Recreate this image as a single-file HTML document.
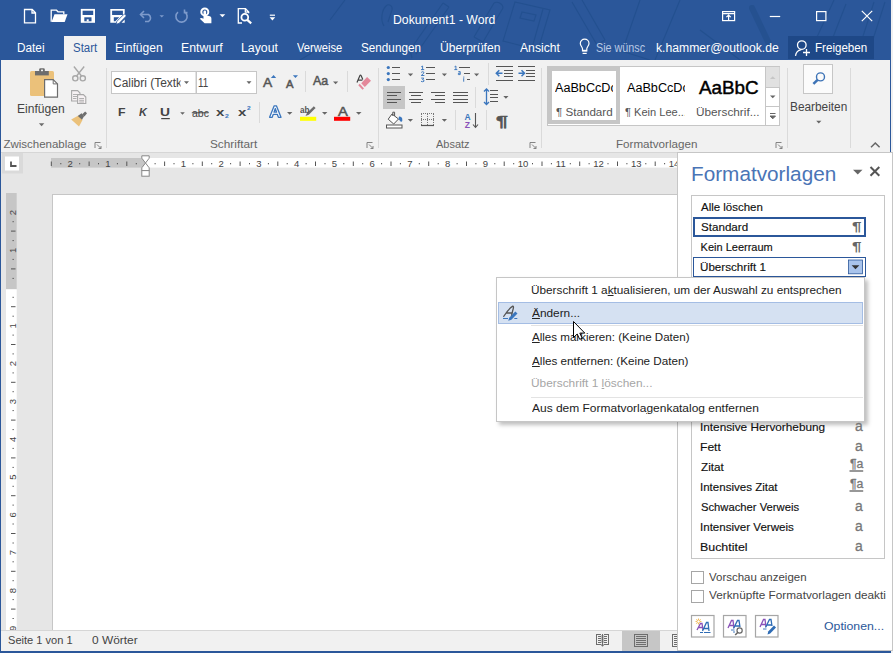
<!DOCTYPE html><html><head><meta charset="utf-8"><style>
*{margin:0;padding:0;box-sizing:border-box}
html,body{width:893px;height:653px;overflow:hidden;background:#2b579a;font-family:"Liberation Sans",sans-serif}
.a{position:absolute}
.t{position:absolute;white-space:nowrap;line-height:1;transform-origin:0 0}
</style></head><body>

<!-- window bg right strip -->
<div class="a" style="left:891px;top:0;width:2px;height:653px;background:#f0f0f0"></div>
<!-- ribbon -->
<div class="a" style="left:1px;top:60px;width:889px;height:92px;background:#f1f1f1"></div>
<div class="a" style="left:64px;top:36px;width:42px;height:24px;background:#f1f1f1"></div>
<svg class="a" style="left:0;top:0" width="891" height="60" viewBox="0 0 891 60">
<g fill="none" stroke="#23508f" stroke-width="1.1" opacity="0.9">
 <path d="M384 26C380 20 382 10 386 6C389 3 393 6 392 10L388 22"/>
 <path d="M443 3L410 50 M449 7L416 54 M443 3L449 7 M410 50L412 58"/>
 <path d="M494 3L474 37 M503 8L483 42 M494 3C498 1 503 4 503 8 M474 37L483 42"/>
 <path d="M515 2L550 10L538 50L503 41Z M543 9L532 48"/>
 <path d="M522 12L536 15L534 21L520 18Z"/>
 <path d="M572 2L597 45 M582 0L605 40 M597 45L605 40"/>
 <path d="M640 0L622 52 M612 48L650 60"/>
 <path d="M680 0L655 60 M700 30L740 60"/>
 <path d="M834 0L812 48 M846 4L828 50 M812 48L828 50"/>
 <path d="M874 2L856 58 M885 2L867 58"/>
 <path d="M320 48L300 60 M330 20L345 0"/>
</g>
<path d="M752 8L770 46" stroke="#24508e" stroke-width="6" stroke-linecap="round" opacity="0.8"/>
</svg>

<div class="a" style="left:788px;top:36px;width:86px;height:23px;background:#1e4887"></div>
<svg class="a" style="left:0;top:0" width="893" height="60" viewBox="0 0 893 60">
<g fill="none" stroke="#fff" stroke-width="1.3">
 <!-- new -->
 <path d="M24.5 9.5H32.2L35.5 12.8V22.8H24.5Z M32 9.5V13H35.5"/>
 <!-- open -->
 <path d="M51.2 21.8V10.2H56.5L58 11.8H63.8V14.2"/>
 <!-- save -->
 
 <!-- save edit -->
 
</g>
<path d="M51.5 22L54.5 14.3H67.5L64.7 22Z" fill="#fff"/>
<rect x="80.8" y="8.9" width="14.2" height="13.9" fill="#fff"/>
<rect x="82.6" y="10.7" width="10.6" height="4.3" fill="#2b579a"/>
<rect x="84.3" y="17.3" width="7.2" height="4" fill="#2b579a"/>
<rect x="86.7" y="19.3" width="2" height="2.1" fill="#fff"/>
<path d="M110.3 8.9H124.7V15.2L117 22.8H110.3Z" fill="#fff"/>
<rect x="112.1" y="10.7" width="10.8" height="4.3" fill="#2b579a"/>
<path d="M113.8 17.3H119.3L115.3 21.3H113.8Z" fill="#2b579a"/>
<path d="M121.5 22.8H124.7V19.6Z" fill="#fff"/>
<path d="M116 24.3L116.9 21.3L123.5 14.7A1.3 1.3 0 0 1 125.6 16.8L119 23.4Z" fill="#fff" stroke="#2b579a" stroke-width="0.8"/>
<!-- undo disabled -->
<g fill="none" stroke="#7d9acb" stroke-width="1.6">
 <path d="M141 14.5H148.5A4 4 0 0 1 148.5 21.5H145"/>
 <path d="M144 11L140.5 14.5L144 18"/>
 <path d="M178 12.2A5.6 5.6 0 1 0 184.5 11.8 M184.5 9.5V12.6H187.5"/>
</g>
<path d="M159.5 15.2H164L161.75 17.6Z" fill="#7d9acb"/>
<!-- touch -->
<circle cx="204.8" cy="11.9" r="3.5" fill="none" stroke="#fff" stroke-width="2"/>
<path d="M203.5 18.8V11.8A1.3 1.3 0 0 1 206.1 11.8V15.3L209.9 16.3Q211.4 16.8 211.4 18.4V23.3H204.6L199.8 18.8Q200.9 17.4 202.3 18.2Z" fill="#fff"/>
<path d="M219.5 14.3H225.3L222.4 17.3Z" fill="#fff"/>
<!-- print preview -->
<g fill="none" stroke="#fff" stroke-width="1.3">
 <path d="M242 23H238.3V8.7H245.5L248.7 12V13.2 M245.3 8.7V12.2H248.7"/>
 <circle cx="244.8" cy="17.3" r="3.4" stroke-width="1.8"/>
 <path d="M247.3 19.9L251.2 23.4" stroke-width="2.2"/>
</g>
<!-- customize -->
<path d="M269.8 15.2H275" stroke="#fff" stroke-width="1.2"/>
<path d="M269.6 17.3H275.2L272.4 20.5Z" fill="#fff"/>
<!-- window controls -->
<g fill="none" stroke="#fff" stroke-width="1.2">
 <rect x="722.6" y="11.6" width="12" height="9"/>
 <path d="M722.6 13.6H734.6 M728.6 20.6V15 M726.4 17.2L728.6 15L730.8 17.2"/>
 <path d="M769.8 16.5H780.2"/>
 <rect x="816.6" y="11.6" width="9.3" height="9"/>
 <path d="M861.8 10.8L872.2 21.2 M872.2 10.8L861.8 21.2"/>
</g>
<!-- bulb -->
<g fill="none" stroke="#fff" stroke-width="1.2">
 <path d="M582.5 50.8V48.8C582.5 47.2 580.3 45.6 580.3 43.5A4.35 4.35 0 0 1 589 43.5C589 45.6 586.8 47.2 586.8 48.8V50.8Z"/>
 <path d="M582.6 53.4H586.7"/>
</g>
<path d="M582.5 49.8H586.8V51.3H582.5Z" fill="#fff"/>
<!-- person -->
<g fill="none" stroke="#fff" stroke-width="1.3">
 <circle cx="801.8" cy="45.1" r="4.3"/>
 <path d="M795.5 55.8C796 52 798 50.2 801.3 49.6"/>
 <path d="M803 52.5H810 M806.5 49V56"/>
</g>
</svg>

<svg class="a" style="left:0;top:60px" width="893" height="92" viewBox="0 60 893 92">
<!-- separators -->
<g stroke="#dadada" stroke-width="1" shape-rendering="crispEdges">
 <path d="M106.5 68V148 M378.5 68V148 M541.5 68V148 M787.5 68V148 M850.5 68V148"/>
 <path d="M305.5 71V92 M347.5 71V92 M259.5 102V123 M488.5 63V85 M475.5 87V108 M455.5 110V130 M486.5 110V130"/>
</g>
<!-- clipboard -->
<rect x="30" y="71" width="24" height="25" rx="1.5" fill="#ebc17a"/>
<path d="M35 71H48.8V75.4H35Z" fill="#6d6d6d"/>
<path d="M39.2 71.2V69.5A1.2 1.2 0 0 1 40.4 68.3H43.6A1.2 1.2 0 0 1 44.8 69.5V71.2Z" fill="#6d6d6d"/>
<rect x="41" y="69.6" width="2" height="1.6" fill="#f1f1f1"/>
<path d="M44.6 79.6H53.2L57.5 83.9V97.1H44.6Z" fill="#fff" stroke="#6d6d6d" stroke-width="1.2"/>
<path d="M53.2 79.6V83.9H57.5" fill="none" stroke="#6d6d6d" stroke-width="1"/>
<path d="M38.9 123.2H44.3L41.6 126.3Z" fill="#6d6d6d"/>
<!-- scissors -->
<g fill="none" stroke="#a8a8a8" stroke-width="1.4">
 <circle cx="75.3" cy="78.3" r="2.6"/>
 <circle cx="82.8" cy="78.3" r="2.6"/>
 <path d="M76.6 76L84.2 66.5 M81.5 76L73.9 66.5"/>
</g>
<!-- copy -->
<g fill="#f6f1f3" stroke="#a8a8a8" stroke-width="1.1">
 <path d="M71.6 90.6H77.6L80 93V101H71.6Z"/>
 <path d="M77.6 94.6H83.4L85.8 97V103.5H77.6Z"/>
</g>
<g stroke="#a8a8a8" stroke-width="0.9">
 <path d="M73 94.5H77 M73 96.5H77 M73 98.5H76.5 M79.2 98.5H84 M79.2 100.3H84 M79.2 102H84"/>
</g>
<!-- format painter -->
<path d="M71.2 119.5L78.5 115.5L82.5 120L79 126.5Z" fill="#ebc17a"/>
<path d="M77.8 116L81.5 113.2L84.2 116L82 119.8Z" fill="#6d6d6d"/>
<path d="M82.2 114.2L85.2 111.5L87 113.3L84.5 116.5Z" fill="#6d6d6d"/>
<!-- font name / size boxes -->
<rect x="111.5" y="71.5" width="84" height="22" fill="#fff" stroke="#c6c6c6"/>
<rect x="196.5" y="71.5" width="60" height="22" fill="#fff" stroke="#c6c6c6"/>
<path d="M184 81.3H189L186.5 84Z M246.5 81.3H251.5L249 84Z" fill="#666"/>
<!-- grow/shrink triangles -->
<path d="M270.9 77.9L273.55 75.1L276.2 77.9Z" fill="#3b76bd"/>
<path d="M292.9 75.2H298L295.45 78Z" fill="#3b76bd"/>
<path d="M333 81.4H338.2L335.6 84.2Z" fill="#666"/>
<!-- eraser -->
<path d="M361.2 83.2L367.1 77L371 80.7L364.8 86.9Z" fill="#e4889a"/>
<path d="M358.3 85.2L359.7 83.8L364 88.4L362.5 89.8Z" fill="#e4889a"/>
<path d="M357 82.6L359.8 75.8Q360.5 74.6 361.2 75.8L362.8 79.6 M358.3 80.2H362.4" fill="none" stroke="#444" stroke-width="1.2"/>
<!-- row2 arrows -->
<path d="M180.2 112.2H184.8L182.5 114.7Z M287 112H292.4L289.7 114.8Z M322 112H327.4L324.7 114.8Z M356 112H361.5L358.75 114.8Z" fill="#666"/>
<!-- underline, strike -->
<path d="M161.2 118.6H169.8" stroke="#444" stroke-width="1.2"/>
<path d="M191.8 112.8H208.5" stroke="#444" stroke-width="1"/>
<!-- text effects A -->
<path d="M269.6 117.3L274.2 105.8H276.4L281 117.3H278.4L277.3 114.3H273.3L272.2 117.3Z M274 112.2H276.6L275.3 108.5Z" fill="#fff" stroke="#3b76bd" stroke-width="1.3" stroke-linejoin="round"/>
<!-- highlight -->
<rect x="300" y="116.8" width="16.2" height="4" fill="#ffff00"/>
<path d="M305.5 116L307 113L313.8 106.2L315.6 108L308.8 114.8Z" fill="#6d6d6d"/>
<!-- font color -->
<rect x="334" y="116.8" width="16.2" height="4" fill="#ff0000"/>
<!-- bullets -->
<g fill="#3b76bd"><circle cx="388.3" cy="67.5" r="1.6"/><circle cx="388.3" cy="73.6" r="1.6"/><circle cx="388.3" cy="79.6" r="1.6"/></g>
<g stroke="#555" stroke-width="1" shape-rendering="crispEdges">
 <path d="M391.5 67.5H400 M391.5 73.5H400 M391.5 79.5H400"/>
 <path d="M425.5 67.5H435 M425.5 73.5H435 M425.5 79.5H435"/>
 <path d="M459 67.5H470 M464 73.5H470 M467 79.5H470"/>
</g>
<g fill="none" stroke="#3b76bd" stroke-width="0.95">
 <path d="M421.2 66.8L422.6 66V69.8 M421 69.6H424.2"/>
 <path d="M421.2 72.4Q422.8 71 424 72.4Q424 73.6 421.2 75.5H424.4"/>
 <path d="M421.2 78.1H423.8L422.5 79.6Q424.5 79.8 424 81.2Q422.8 82.2 421 81.3"/>
 <path d="M454.5 66.8L455.9 66V69.8 M454.3 69.6H457.3"/>
 <path d="M458.3 71.6H460.2V74.6H458.4V73.2H460.2"/>
 <path d="M463.7 78.2V81.7"/>
</g>
<rect x="463.2" y="76.6" width="1.1" height="1" fill="#3b76bd"/>
<path d="M407.8 73.6H413.2L410.5 76.2Z M441.8 73.6H447L444.4 76.2Z M474 73.6H479.2L476.6 76.2Z" fill="#666"/>
<!-- indent -->
<g stroke="#555" stroke-width="1" shape-rendering="crispEdges">
 <path d="M495.5 66.5H512.5 M503.5 70H512.5 M503.5 73.3H512.5 M503.5 76.6H512.5 M495.5 80H512.5"/>
 <path d="M518 66.5H534.5 M526 70H534.5 M526 73.3H534.5 M526 76.6H534.5 M518 80H534.5"/>
</g>
<g stroke="#3b76bd" stroke-width="1.5" fill="none">
 <path d="M496.5 73.3H502.5 M499.3 70.3L496.3 73.3L499.3 76.3"/>
 <path d="M518.5 73.3H524.5 M521.5 70.3L524.5 73.3L521.5 76.3"/>
</g>
<!-- alignment -->
<rect x="383" y="86" width="22" height="23" fill="#c6c6c6"/>
<g stroke="#555" stroke-width="1" shape-rendering="crispEdges">
 <path d="M387 92.5H401 M387 95.7H397 M387 99H401 M387 102.2H397"/>
 <path d="M409 92.5H423 M411 95.7H421 M409 99H423 M411 102.2H421"/>
 <path d="M431 92.5H445 M435 95.7H445 M431 99H445 M435 102.2H445"/>
 <path d="M453 92.5H467.5 M453 95.7H467.5 M453 99H467.5 M453 102.2H467.5"/>
 <path d="M490 90.5H497.5 M490 94H497.5 M490 97.5H497.5 M490 101H497.5"/>
</g>
<g stroke="#3b76bd" stroke-width="1.3" fill="none">
 <path d="M486.5 89V104.5 M484 91.5L486.5 89L489 91.5 M484 102L486.5 104.5L489 102"/>
</g>
<path d="M503.3 96H508.5L505.9 98.8Z M407.8 119H413L410.4 121.8Z M441.8 119H447L444.4 121.8Z" fill="#666"/>
<!-- shading -->
<path d="M392 114L398.5 119L393.7 124L388.2 119.2Z" fill="#fff" stroke="#555" stroke-width="1"/>
<path d="M392.8 116V112.2H394.6V116" fill="none" stroke="#555" stroke-width="1"/>
<path d="M399 116.5A3 3 0 0 1 401 122L398.5 119Z" fill="#3b76bd"/>
<rect x="386.5" y="125" width="15.5" height="3" fill="#fff" stroke="#555" stroke-width="1"/>
<!-- borders -->
<g stroke="#777" stroke-width="1" stroke-dasharray="1 1" fill="none" shape-rendering="crispEdges">
 <path d="M421 113.5H434 M421 119.5H434 M421.5 113.5V125 M427.5 113.5V125 M433.5 113.5V125"/>
</g>
<path d="M421 125.5H434" stroke="#555" stroke-width="1.2"/>
<!-- sort -->
<text x="464.4" y="119.6" font-family="Liberation Sans" font-size="8.5" font-weight="bold" fill="#3b76bd">A</text>
<text x="464.8" y="127.8" font-family="Liberation Sans" font-size="8.5" font-weight="bold" fill="#8a52b8">Z</text>
<path d="M475.5 113V127 M473 124.5L475.5 127.5L478 124.5" stroke="#555" stroke-width="1.1" fill="none"/>
<!-- gallery -->
<rect x="547.5" y="66.5" width="232" height="59" fill="#fff" stroke="#c6c6c6"/>

<path d="M765.5 66.5V125.5 M765.5 87.5H779.5 M765.5 106.5H779.5" stroke="#c6c6c6" fill="none" shape-rendering="crispEdges"/>
<rect x="766" y="67" width="13.5" height="20" fill="#e1e1e1"/>
<path d="M770 79H775.5L772.75 76.2Z" fill="#c6c6c6"/>
<path d="M770 95.5H775.5L772.75 98.3Z" fill="#666"/>
<path d="M770 113.5H775.5 M770 116H775.5L772.75 118.8Z" stroke="#666" fill="#666" stroke-width="1"/>
<!-- bearbeiten -->
<rect x="803.5" y="64.5" width="29" height="29" fill="#fbfbfb" stroke="#c6c6c6"/>
<circle cx="820.5" cy="76.9" r="4" fill="none" stroke="#3d73b6" stroke-width="1.4"/>
<path d="M817.6 79.9L813.4 83.9" stroke="#3d73b6" stroke-width="2.6"/>
<path d="M816.2 120.8H821.4L818.8 123.6Z" fill="#666"/>
<!-- dialog launchers -->
<g fill="none" stroke="#777" stroke-width="0.9">
 <path d="M95 148V142.5H100.5 M97 144.5L101 148.5 M101 146V148.5H98.5"/>
 <path d="M367 148V142.5H372.5 M369 144.5L373 148.5 M373 146V148.5H370.5"/>
 <path d="M530 148V142.5H535.5 M532 144.5L536 148.5 M536 146V148.5H533.5"/>
 <path d="M776 148V142.5H781.5 M778 144.5L782 148.5 M782 146V148.5H779.5"/>
</g>
<path d="M871 147.3L875.3 143L879.6 147.3" fill="none" stroke="#666" stroke-width="1.5"/>
<!-- right window border -->
<path d="M890.5 60V152" stroke="#2b579a" stroke-width="1"/>
</svg>

<!-- ribbon bottom border -->
<div class="a" style="left:1px;top:152px;width:889px;height:1px;background:#d6d6d6"></div>
<!-- doc area -->
<div class="a" style="left:1px;top:153px;width:889px;height:477px;background:#e6e6e6"></div>
<!-- page -->
<div class="a" style="left:52px;top:194px;width:838px;height:436px;background:#fff;border-left:1px solid #c6c6c6;border-top:1px solid #c6c6c6"></div>
<svg class="a" style="left:0;top:150px" width="893" height="480" viewBox="0 150 893 480">
<rect x="2" y="153" width="21" height="20.5" fill="#dadada"/>
<rect x="5" y="156.5" width="14" height="14" fill="#fff"/>
<path d="M11 161.5V166H16.5" fill="none" stroke="#555" stroke-width="1.8"/>
<rect x="51" y="158" width="94.7" height="9.6" fill="#c6c6c6"/>
<rect x="145.7" y="158" width="531.3" height="9.6" fill="#fff"/>
<g fill="#555" stroke="none">
<rect x="50.8" y="161.5" width="1" height="4.5"/>
<rect x="60.3" y="163" width="1" height="1.3"/>
<rect x="79.2" y="163" width="1" height="1.3"/>
<rect x="88.6" y="161.5" width="1" height="4.5"/>
<rect x="98.0" y="163" width="1" height="1.3"/>
<rect x="116.9" y="163" width="1" height="1.3"/>
<rect x="126.3" y="161.5" width="1" height="4.5"/>
<rect x="135.8" y="163" width="1" height="1.3"/>
<rect x="154.6" y="163" width="1" height="1.3"/>
<rect x="164.1" y="161.5" width="1" height="4.5"/>
<rect x="173.5" y="163" width="1" height="1.3"/>
<rect x="192.4" y="163" width="1" height="1.3"/>
<rect x="201.8" y="161.5" width="1" height="4.5"/>
<rect x="211.2" y="163" width="1" height="1.3"/>
<rect x="230.1" y="163" width="1" height="1.3"/>
<rect x="239.6" y="161.5" width="1" height="4.5"/>
<rect x="249.0" y="163" width="1" height="1.3"/>
<rect x="267.9" y="163" width="1" height="1.3"/>
<rect x="277.3" y="161.5" width="1" height="4.5"/>
<rect x="286.7" y="163" width="1" height="1.3"/>
<rect x="305.6" y="163" width="1" height="1.3"/>
<rect x="315.0" y="161.5" width="1" height="4.5"/>
<rect x="324.5" y="163" width="1" height="1.3"/>
<rect x="343.3" y="163" width="1" height="1.3"/>
<rect x="352.8" y="161.5" width="1" height="4.5"/>
<rect x="362.2" y="163" width="1" height="1.3"/>
<rect x="381.1" y="163" width="1" height="1.3"/>
<rect x="390.5" y="161.5" width="1" height="4.5"/>
<rect x="399.9" y="163" width="1" height="1.3"/>
<rect x="418.8" y="163" width="1" height="1.3"/>
<rect x="428.2" y="161.5" width="1" height="4.5"/>
<rect x="437.7" y="163" width="1" height="1.3"/>
<rect x="456.6" y="163" width="1" height="1.3"/>
<rect x="466.0" y="161.5" width="1" height="4.5"/>
<rect x="475.4" y="163" width="1" height="1.3"/>
<rect x="494.3" y="163" width="1" height="1.3"/>
<rect x="503.7" y="161.5" width="1" height="4.5"/>
<rect x="513.2" y="163" width="1" height="1.3"/>
<rect x="532.0" y="163" width="1" height="1.3"/>
<rect x="541.5" y="161.5" width="1" height="4.5"/>
<rect x="550.9" y="163" width="1" height="1.3"/>
<rect x="569.8" y="163" width="1" height="1.3"/>
<rect x="579.2" y="161.5" width="1" height="4.5"/>
<rect x="588.6" y="163" width="1" height="1.3"/>
<rect x="607.5" y="163" width="1" height="1.3"/>
<rect x="617.0" y="161.5" width="1" height="4.5"/>
<rect x="626.4" y="163" width="1" height="1.3"/>
<rect x="645.3" y="163" width="1" height="1.3"/>
<rect x="654.7" y="161.5" width="1" height="4.5"/>
<rect x="664.1" y="163" width="1" height="1.3"/>
</g>
<g font-family="Liberation Sans" font-size="9.5" fill="#444" text-anchor="middle">
<text x="70.2" y="167.3">2</text>
<text x="108.0" y="167.3">1</text>
<text x="183.4" y="167.3">1</text>
<text x="221.2" y="167.3">2</text>
<text x="258.9" y="167.3">3</text>
<text x="296.7" y="167.3">4</text>
<text x="334.4" y="167.3">5</text>
<text x="372.1" y="167.3">6</text>
<text x="409.9" y="167.3">7</text>
<text x="447.6" y="167.3">8</text>
<text x="485.4" y="167.3">9</text>
<text x="523.1" y="167.3">10</text>
<text x="560.8" y="167.3">11</text>
<text x="598.6" y="167.3">12</text>
<text x="636.3" y="167.3">13</text>
<text x="674.1" y="167.3">14</text>
</g>
<path d="M141.8 155.8H149.2V158.2L145.5 163L149.2 167.8V170.6H141.8V167.8L145.5 163L141.8 158.2Z" fill="#fff" stroke="#888" stroke-width="1"/>
<rect x="141.8" y="170.6" width="7.4" height="5.6" fill="#fff" stroke="#888" stroke-width="1"/>
<rect x="6" y="193" width="10.7" height="96.3" fill="#c6c6c6"/>
<rect x="6" y="289.3" width="10.7" height="340.7" fill="#fff"/>
<g fill="#555">
<rect x="12.5" y="221.2" width="1.3" height="1"/>
<rect x="11" y="230.6" width="4.5" height="1"/>
<rect x="12.5" y="240.1" width="1.3" height="1"/>
<rect x="12.5" y="258.9" width="1.3" height="1"/>
<rect x="11" y="268.4" width="4.5" height="1"/>
<rect x="12.5" y="277.9" width="1.3" height="1"/>
<rect x="12.5" y="296.8" width="1.3" height="1"/>
<rect x="11" y="306.2" width="4.5" height="1"/>
<rect x="12.5" y="315.7" width="1.3" height="1"/>
<rect x="12.5" y="334.6" width="1.3" height="1"/>
<rect x="11" y="344.0" width="4.5" height="1"/>
<rect x="12.5" y="353.4" width="1.3" height="1"/>
<rect x="12.5" y="372.4" width="1.3" height="1"/>
<rect x="11" y="381.8" width="4.5" height="1"/>
<rect x="12.5" y="391.2" width="1.3" height="1"/>
<rect x="12.5" y="410.1" width="1.3" height="1"/>
<rect x="11" y="419.6" width="4.5" height="1"/>
<rect x="12.5" y="429.1" width="1.3" height="1"/>
<rect x="12.5" y="447.9" width="1.3" height="1"/>
<rect x="11" y="457.4" width="4.5" height="1"/>
<rect x="12.5" y="466.9" width="1.3" height="1"/>
<rect x="12.5" y="485.8" width="1.3" height="1"/>
<rect x="11" y="495.2" width="4.5" height="1"/>
<rect x="12.5" y="504.6" width="1.3" height="1"/>
<rect x="12.5" y="523.5" width="1.3" height="1"/>
<rect x="11" y="533.0" width="4.5" height="1"/>
<rect x="12.5" y="542.5" width="1.3" height="1"/>
<rect x="12.5" y="561.3" width="1.3" height="1"/>
<rect x="11" y="570.8" width="4.5" height="1"/>
<rect x="12.5" y="580.2" width="1.3" height="1"/>
<rect x="12.5" y="599.1" width="1.3" height="1"/>
<rect x="11" y="608.6" width="4.5" height="1"/>
<rect x="12.5" y="618.0" width="1.3" height="1"/>
</g>
<text transform="translate(16.2 212.5) rotate(-90)" text-anchor="middle" font-family="Liberation Sans" font-size="9.5" fill="#444">2</text>
<text transform="translate(16.2 250.3) rotate(-90)" text-anchor="middle" font-family="Liberation Sans" font-size="9.5" fill="#444">1</text>
<text transform="translate(16.2 325.9) rotate(-90)" text-anchor="middle" font-family="Liberation Sans" font-size="9.5" fill="#444">1</text>
<text transform="translate(16.2 363.7) rotate(-90)" text-anchor="middle" font-family="Liberation Sans" font-size="9.5" fill="#444">2</text>
<text transform="translate(16.2 401.5) rotate(-90)" text-anchor="middle" font-family="Liberation Sans" font-size="9.5" fill="#444">3</text>
<text transform="translate(16.2 439.3) rotate(-90)" text-anchor="middle" font-family="Liberation Sans" font-size="9.5" fill="#444">4</text>
<text transform="translate(16.2 477.1) rotate(-90)" text-anchor="middle" font-family="Liberation Sans" font-size="9.5" fill="#444">5</text>
<text transform="translate(16.2 514.9) rotate(-90)" text-anchor="middle" font-family="Liberation Sans" font-size="9.5" fill="#444">6</text>
<text transform="translate(16.2 552.7) rotate(-90)" text-anchor="middle" font-family="Liberation Sans" font-size="9.5" fill="#444">7</text>
<text transform="translate(16.2 590.5) rotate(-90)" text-anchor="middle" font-family="Liberation Sans" font-size="9.5" fill="#444">8</text>
<text transform="translate(16.2 628.3) rotate(-90)" text-anchor="middle" font-family="Liberation Sans" font-size="9.5" fill="#444">9</text>
</svg>
<!-- status bar -->
<div class="a" style="left:1px;top:630px;width:889px;height:21px;background:#f1f1f1;border-top:1px solid #d6d6d6"></div>
<div class="a" style="left:622px;top:631px;width:38px;height:20px;background:#c6c6c6"></div>
<svg class="a" style="left:590px;top:630px" width="90" height="21" viewBox="590 630 90 21">
<g fill="#6d6d6d" shape-rendering="crispEdges">
 <rect x="634" y="634" width="14" height="1.2"/><rect x="634" y="645.8" width="14" height="1.2"/>
 <rect x="634" y="634" width="1.2" height="13"/><rect x="646.8" y="634" width="1.2" height="13"/>
 <rect x="636" y="636" width="10" height="1"/><rect x="636" y="638" width="10" height="1"/><rect x="636" y="640" width="10" height="1"/><rect x="636" y="642" width="10" height="1"/><rect x="636" y="644" width="10" height="1"/>
 <rect x="672" y="634" width="14" height="1.2"/><rect x="672" y="645.8" width="14" height="1.2"/>
 <rect x="672" y="634" width="1.2" height="13"/>
 <rect x="674" y="636" width="10" height="1"/><rect x="674" y="638" width="10" height="1"/><rect x="674" y="640" width="10" height="1"/><rect x="674" y="642" width="10" height="1"/><rect x="674" y="644" width="10" height="1"/>
 <rect x="596" y="634" width="1.2" height="11"/><rect x="607.8" y="634" width="1.2" height="11"/>
 <rect x="596" y="634" width="5" height="1.2"/><rect x="604" y="634" width="5" height="1.2"/>
 <rect x="596" y="644" width="5" height="1"/><rect x="604" y="644" width="5" height="1"/>
 <rect x="598" y="636" width="3" height="1"/><rect x="598" y="638" width="3" height="1"/><rect x="598" y="640" width="3" height="1"/><rect x="598" y="642" width="3" height="1"/>
 <rect x="604" y="636" width="3" height="1"/><rect x="604" y="638" width="3" height="1"/><rect x="604" y="640" width="3" height="1"/><rect x="604" y="642" width="3" height="1"/>
 <rect x="602" y="634" width="1" height="12"/>
</g>
<path d="M600.8 636H604.2 M600.8 638H604.2 M600.8 640H604.2 M600.8 642H604.2" stroke="#6d6d6d" stroke-width="0.8"/>
<path d="M600.5 644.5L602.5 646.8L604.5 644.5Z" fill="#6d6d6d"/>
</svg>

<!-- pane -->
<div class="a" style="left:677px;top:152px;width:216px;height:499px;background:#fff;border:1px solid #c6c6c6"></div>
<div class="a" style="left:691px;top:195px;width:194px;height:364px;border:1px solid #c6c6c6"></div>
<div class="a" style="left:693px;top:217px;width:173px;height:20px;border:2px solid #2b579a"></div>
<div class="a" style="left:693px;top:257px;width:173px;height:20px;border:1px solid #2b579a"></div>
<svg class="a" style="left:677px;top:152px" width="216" height="499" viewBox="677 152 216 499">
<path d="M853 169.8H862.5L857.75 174.6Z" fill="#666"/>
<path d="M870.5 167L879.3 175.8 M879.3 167L870.5 175.8" stroke="#555" stroke-width="2"/>
<rect x="848.5" y="260" width="14" height="13.8" fill="#a9c4ec" stroke="#2b579a" stroke-width="0.8"/>
<path d="M851.6 265.2H859.4L855.5 269.2Z" fill="#333"/>
<path d="M849.5 470.9H863.2 M849.5 490.9H863.2" stroke="#777" stroke-width="1.5"/>
<!-- checkboxes -->
<rect x="691.5" y="571.5" width="12" height="12" fill="#fff" stroke="#a6a6a6"/>
<rect x="691.5" y="590.5" width="12" height="12" fill="#fff" stroke="#a6a6a6"/>
<!-- buttons -->
<rect x="691.5" y="615.5" width="22.5" height="21.5" fill="#fff" stroke="#a6a6a6" stroke-width="1.2"/>
<rect x="723.5" y="615.5" width="22.5" height="21.5" fill="#fff" stroke="#a6a6a6" stroke-width="1.2"/>
<rect x="755.5" y="615.5" width="22.5" height="21.5" fill="#fff" stroke="#a6a6a6" stroke-width="1.2"/>
<!-- button 1: new style -->
<g stroke="#f0b040" stroke-width="0.8"><path d="M698.5 618.5V624.5 M695.5 621.5H701.5 M696.3 619.3L700.7 623.7 M700.7 619.3L696.3 623.7"/></g>
<circle cx="698.5" cy="621.5" r="1.6" fill="#fff" stroke="#f0b040" stroke-width="0.7"/>
<path d="M697 630L700.5 623.5H702L703 630 M698.5 627.5H702.5" fill="none" stroke="#8a52b8" stroke-width="1.3"/>
<path d="M702.5 631L706.5 622.5H708L709 631 M704 628.5H708.8" fill="none" stroke="#2f6cb5" stroke-width="1.3"/>
<path d="M700 632.5H703 M704 632.5H710.5" stroke="#2f6cb5" stroke-width="1"/>
<!-- button 2: inspector -->
<path d="M728 628L731.5 620.5H733L734 628 M729.5 625.5H734" fill="none" stroke="#8a52b8" stroke-width="1.3"/>
<path d="M733.5 628.5L737.5 620.5H739L740 627 M735 626H739.5" fill="none" stroke="#2f6cb5" stroke-width="1.3"/>
<path d="M731 630H734.5 M733 632H735" stroke="#2f6cb5" stroke-width="0.9"/>
<circle cx="739.6" cy="630.5" r="2.6" fill="#fff" stroke="#666" stroke-width="1.2"/>
<path d="M737.7 632.5L735.2 635" stroke="#666" stroke-width="1.6"/>
<!-- button 3: manage -->
<path d="M760 627L763.5 619.5H765L766 627 M761.5 624.5H766" fill="none" stroke="#8a52b8" stroke-width="1.3"/>
<path d="M765.5 627.5L769.5 619.5H771L772 626 M767 625H771.5" fill="none" stroke="#2f6cb5" stroke-width="1.3"/>
<path d="M763 629H766.5" stroke="#2f6cb5" stroke-width="0.9"/>
<path d="M767.5 634.5L768.2 631.5L774 625.5L776 627.5L770.2 633.5Z" fill="#2f6cb5"/>
</svg>

<!-- menu -->
<div class="a" style="left:496px;top:277px;width:369px;height:145px;background:#fff;border:1px solid #c6c6c6;box-shadow:3px 3px 4px rgba(0,0,0,0.25)"></div>
<div class="a" style="left:498px;top:302px;width:365px;height:22px;background:#d5e1f2;border:1px solid #a4bde4"></div>
<svg class="a" style="left:496px;top:277px" width="370" height="146" viewBox="496 277 370 146">
<path d="M531 325.5H863 M531 397.5H863" stroke="#e3e3e3" stroke-width="1"/>
<path d="M503.5 316.8C506 313 509 308 512.8 306.2C513.8 306 513.6 308 512.6 311L511.5 316 M506.5 313H512.2" fill="none" stroke="#555" stroke-width="1.3"/>
<path d="M503 318.5H508 M514.3 318.5H517.3" stroke="#3b76bd" stroke-width="1.1"/>
<path d="M508.2 320.8L509.2 317.8L515.3 311.5L517.5 313.5L511.4 319.8Z" fill="#3b76bd"/>
</svg>



<div class="t" id="t0" style="left:392.82px;top:13.52px;font-size:12.5px;color:#fff;transform:scaleX(0.9779);">Dokument1 - Word</div>
<div class="t" id="t1" style="left:16.92px;top:42.24px;font-size:12px;color:#fff;transform:scaleX(0.9829);">Datei</div>
<div class="t" id="t2" style="left:72.72px;top:42.24px;font-size:12px;color:#2b579a;transform:scaleX(0.9535);">Start</div>
<div class="t" id="t3" style="left:115.49px;top:42.24px;font-size:12px;color:#fff;transform:scaleX(1.0060);">Einfügen</div>
<div class="t" id="t4" style="left:181.27px;top:42.24px;font-size:12px;color:#fff;transform:scaleX(1.0264);">Entwurf</div>
<div class="t" id="t5" style="left:241.07px;top:42.24px;font-size:12px;color:#fff;transform:scaleX(1.0257);">Layout</div>
<div class="t" id="t6" style="left:297.20px;top:42.24px;font-size:12px;color:#fff;transform:scaleX(0.9285);">Verweise</div>
<div class="t" id="t7" style="left:361.31px;top:42.24px;font-size:12px;color:#fff;transform:scaleX(0.9763);">Sendungen</div>
<div class="t" id="t8" style="left:439.72px;top:42.24px;font-size:12px;color:#fff;transform:scaleX(1.0056);">Überprüfen</div>
<div class="t" id="t9" style="left:519.50px;top:42.24px;font-size:12px;color:#fff;transform:scaleX(1.0140);">Ansicht</div>
<div class="t" id="t10" style="left:595.85px;top:42.24px;font-size:12px;color:#b9c9e4;transform:scaleX(0.8984);">Sie wünsc</div>
<div class="t" id="t11" style="left:656.04px;top:42.24px;font-size:12px;color:#fff;transform:scaleX(1.0157);">k.hammer@outlook.de</div>
<div class="t" id="t12" style="left:814.53px;top:42.24px;font-size:12px;color:#fff;transform:scaleX(0.9665);">Freigeben</div>
<div class="t" id="t13" style="left:3.42px;top:138.56px;font-size:11.5px;color:#666;">Zwischenablage</div>
<div class="t" id="t14" style="left:210.49px;top:138.56px;font-size:11.5px;color:#666;transform:scaleX(1.0264);">Schriftart</div>
<div class="t" id="t15" style="left:435.60px;top:138.56px;font-size:11.5px;color:#666;transform:scaleX(0.9560);">Absatz</div>
<div class="t" id="t16" style="left:615.72px;top:138.56px;font-size:11.5px;color:#666;transform:scaleX(1.0105);">Formatvorlagen</div>
<div class="t" id="t17" style="left:17.39px;top:103.34px;font-size:12px;color:#444;transform:scaleX(1.0060);">Einfügen</div>
<div class="t" id="t18" style="left:790.01px;top:101.14px;font-size:12px;color:#444;transform:scaleX(0.9867);">Bearbeiten</div>
<div class="t" id="t19" style="left:690.66px;top:164.24px;font-size:20.5px;color:#4a74b6;transform:scaleX(1.0119);">Formatvorlagen</div>
<div class="t" id="t20" style="left:112.88px;top:77.14px;font-size:12px;color:#444;transform:scaleX(0.9964);">Calibri (Textk</div>
<div class="t" id="t21" style="left:198.08px;top:77.14px;font-size:12px;color:#444;transform:scaleX(0.8182);">11</div>
<div class="t" id="t22" style="left:118.40px;top:106.76px;font-size:11.5px;color:#444;font-weight:700;transform:scaleX(1.0723);">F</div>
<div class="t" id="t23" style="left:138.78px;top:106.76px;font-size:11.5px;color:#444;font-weight:700;transform:scaleX(0.9465);font-style:italic;">K</div>
<div class="t" id="t24" style="left:160.45px;top:106.76px;font-size:11.5px;color:#444;font-weight:700;transform:scaleX(1.2000);">U</div>
<div class="t" id="t25" style="left:191.62px;top:107.61px;font-size:10.5px;color:#444;transform:scaleX(1.0031);">abc</div>
<div class="t" id="t26" style="left:216.04px;top:106.76px;font-size:11.5px;color:#444;font-weight:700;transform:scaleX(1.3061);">x</div>
<div class="t" id="t27" style="left:224.95px;top:114.09px;font-size:5.8px;color:#3b76bd;font-weight:700;transform:scaleX(1.1826);">2</div>
<div class="t" id="t28" style="left:238.34px;top:106.76px;font-size:11.5px;color:#444;font-weight:700;transform:scaleX(1.3061);">x</div>
<div class="t" id="t29" style="left:246.86px;top:106.19px;font-size:5.8px;color:#3b76bd;font-weight:700;transform:scaleX(1.1478);">2</div>
<div class="t" id="t30" style="left:263.30px;top:76.37px;font-size:13.5px;color:#555;transform:scaleX(1.0222);-webkit-text-stroke:0.5px currentColor;">A</div>
<div class="t" id="t31" style="left:286.20px;top:78.91px;font-size:10.5px;color:#555;transform:scaleX(1.0714);-webkit-text-stroke:0.5px currentColor;">A</div>
<div class="t" id="t32" style="left:313.00px;top:75.32px;font-size:12.5px;color:#555;transform:scaleX(0.9951);-webkit-text-stroke:0.5px currentColor;">Aa</div>
<div class="t" id="t33" style="left:299.76px;top:106.30px;font-size:8.5px;color:#555;font-weight:700;transform:scaleX(0.9600);">ab</div>
<div class="t" id="t34" style="left:337.70px;top:104.99px;font-size:13px;color:#555;transform:scaleX(1.1362);-webkit-text-stroke:0.5px currentColor;">A</div>
<div class="t" id="t35" style="left:496.00px;top:113.75px;font-size:14px;color:#555;transform:scaleX(1.6000);-webkit-text-stroke:0.6px currentColor;">¶</div>
<div class="t" id="t36" style="left:554.50px;top:82.02px;font-size:12.5px;color:#000;transform:scaleX(1.0103);">AaBbCcDc</div>
<div class="t" id="t37" style="left:555.62px;top:107.26px;font-size:11.5px;color:#555;transform:scaleX(1.0109);">¶ Standard</div>
<div class="t" id="t38" style="left:626.70px;top:82.02px;font-size:12.5px;color:#000;transform:scaleX(1.0103);">AaBbCcDc</div>
<div class="t" id="t39" style="left:624.94px;top:107.26px;font-size:11.5px;color:#555;transform:scaleX(0.9635);">¶ Kein Lee...</div>
<div class="t" id="t40" style="left:698.50px;top:79.26px;font-size:18px;color:#000;transform:scaleX(1.0448);-webkit-text-stroke:0.45px currentColor;">AaBbC</div>
<div class="t" id="t41" style="left:695.70px;top:106.96px;font-size:11.5px;color:#555;transform:scaleX(1.0245);">Überschrif...</div>
<div class="t" id="t42" style="left:701.10px;top:201.89px;font-size:11px;color:#111;transform:scaleX(1.0422);-webkit-text-stroke:0.15px currentColor;">Alle löschen</div>
<div class="t" id="t43" style="left:700.97px;top:221.89px;font-size:11px;color:#111;transform:scaleX(1.0552);-webkit-text-stroke:0.15px currentColor;">Standard</div>
<div class="t" id="t44" style="left:700.62px;top:241.89px;font-size:11px;color:#111;-webkit-text-stroke:0.15px currentColor;">Kein Leerraum</div>
<div class="t" id="t45" style="left:699.57px;top:261.79px;font-size:11px;color:#111;transform:scaleX(1.0574);-webkit-text-stroke:0.15px currentColor;">Überschrift 1</div>
<div class="t" id="t46" style="left:700.13px;top:421.79px;font-size:11px;color:#111;transform:scaleX(1.0710);-webkit-text-stroke:0.15px currentColor;">Intensive Hervorhebung</div>
<div class="t" id="t47" style="left:700.24px;top:441.79px;font-size:11px;color:#111;transform:scaleX(1.1000);-webkit-text-stroke:0.15px currentColor;">Fett</div>
<div class="t" id="t48" style="left:700.80px;top:461.79px;font-size:11px;color:#111;transform:scaleX(1.0667);-webkit-text-stroke:0.15px currentColor;">Zitat</div>
<div class="t" id="t49" style="left:700.15px;top:481.79px;font-size:11px;color:#111;transform:scaleX(1.0484);-webkit-text-stroke:0.15px currentColor;">Intensives Zitat</div>
<div class="t" id="t50" style="left:700.69px;top:501.79px;font-size:11px;color:#111;transform:scaleX(1.0218);-webkit-text-stroke:0.15px currentColor;">Schwacher Verweis</div>
<div class="t" id="t51" style="left:700.15px;top:521.79px;font-size:11px;color:#111;transform:scaleX(1.0515);-webkit-text-stroke:0.15px currentColor;">Intensiver Verweis</div>
<div class="t" id="t52" style="left:700.21px;top:541.79px;font-size:11px;color:#111;transform:scaleX(1.1274);-webkit-text-stroke:0.15px currentColor;">Buchtitel</div>
<div class="t" id="t53" style="left:708.70px;top:571.56px;font-size:11.5px;color:#444;transform:scaleX(0.9967);">Vorschau anzeigen</div>
<div class="t" id="t54" style="left:708.70px;top:590.46px;font-size:11.5px;color:#444;transform:scaleX(1.0246);">Verknüpfte Formatvorlagen deakti</div>
<div class="t" id="t55" style="left:823.97px;top:620.76px;font-size:11.5px;color:#2b579a;transform:scaleX(1.0685);">Optionen...</div>
<div class="t" id="t56" style="left:530.60px;top:285.16px;font-size:11.5px;color:#222;transform:scaleX(1.0248);">Überschrift 1 a<u>k</u>tualisieren, um der Auswahl zu entsprechen</div>
<div class="t" id="t57" style="left:531.50px;top:307.76px;font-size:11.5px;color:#222;transform:scaleX(1.0301);"><u>Ä</u>ndern...</div>
<div class="t" id="t58" style="left:531.50px;top:332.06px;font-size:11.5px;color:#222;transform:scaleX(1.0059);"><u>A</u>lles markieren: (Keine Daten)</div>
<div class="t" id="t59" style="left:531.50px;top:355.66px;font-size:11.5px;color:#222;transform:scaleX(1.0152);"><u>A</u>lles entfernen: (Keine Daten)</div>
<div class="t" id="t60" style="left:530.60px;top:378.26px;font-size:11.5px;color:#a6a6a6;transform:scaleX(1.0324);">Überschrift 1 <u>l</u>öschen...</div>
<div class="t" id="t61" style="left:531.50px;top:403.36px;font-size:11.5px;color:#222;transform:scaleX(1.0407);">Aus dem Formatvorla<u>g</u>enkatalog entfernen</div>
<div class="t" id="t62" style="left:7.82px;top:635.26px;font-size:11.5px;color:#444;transform:scaleX(0.9633);">Seite 1 von 1</div>
<div class="t" id="t63" style="left:91.61px;top:635.26px;font-size:11.5px;color:#444;transform:scaleX(1.0345);">0 Wörter</div>
<div class="t" id="t64" style="left:852.46px;top:220.74px;font-size:12px;color:#666;font-weight:700;transform:scaleX(1.4298);">¶</div>
<div class="t" id="t65" style="left:852.46px;top:240.64px;font-size:12px;color:#666;font-weight:700;transform:scaleX(1.4298);">¶</div>
<div class="t" id="t66" style="left:854.88px;top:418.85px;font-size:14px;color:#777;transform:scaleX(0.9931);-webkit-text-stroke:0.3px currentColor;">a</div>
<div class="t" id="t67" style="left:854.88px;top:438.85px;font-size:14px;color:#777;transform:scaleX(0.9931);-webkit-text-stroke:0.3px currentColor;">a</div>
<div class="t" id="t68" style="left:849.51px;top:457.92px;font-size:12.5px;color:#777;transform:scaleX(0.9811);-webkit-text-stroke:0.3px currentColor;">¶a</div>
<div class="t" id="t69" style="left:849.51px;top:477.92px;font-size:12.5px;color:#777;transform:scaleX(0.9811);-webkit-text-stroke:0.3px currentColor;">¶a</div>
<div class="t" id="t70" style="left:854.88px;top:498.85px;font-size:14px;color:#777;transform:scaleX(0.9931);-webkit-text-stroke:0.3px currentColor;">a</div>
<div class="t" id="t71" style="left:854.88px;top:518.85px;font-size:14px;color:#777;transform:scaleX(0.9931);-webkit-text-stroke:0.3px currentColor;">a</div>
<div class="t" id="t72" style="left:854.88px;top:538.85px;font-size:14px;color:#777;transform:scaleX(0.9931);-webkit-text-stroke:0.3px currentColor;">a</div>
<svg class="a" style="left:0;top:0" width="893" height="653" viewBox="0 0 893 653">
<rect x="180.5" y="72" width="15" height="21" fill="#fff"/>
<path d="M184 81.3H189L186.5 84Z" fill="#666"/>
<rect x="613" y="70" width="4" height="52" fill="#fff"/>
<rect x="550" y="69" width="68" height="53" fill="none" stroke="#c6c6c6" stroke-width="4"/>
<rect x="685" y="68" width="5" height="56" fill="#fff"/>
</svg>
<svg class="a" style="left:570px;top:318px" width="20" height="25" viewBox="570 318 20 25"><path d="M573.5 321.5V337.5L577.2 334L579.7 339.3L582.2 338.3L579.8 333.1H584.8Z" fill="#fff" stroke="#000" stroke-width="1" stroke-linejoin="miter"/></svg>
</body></html>
